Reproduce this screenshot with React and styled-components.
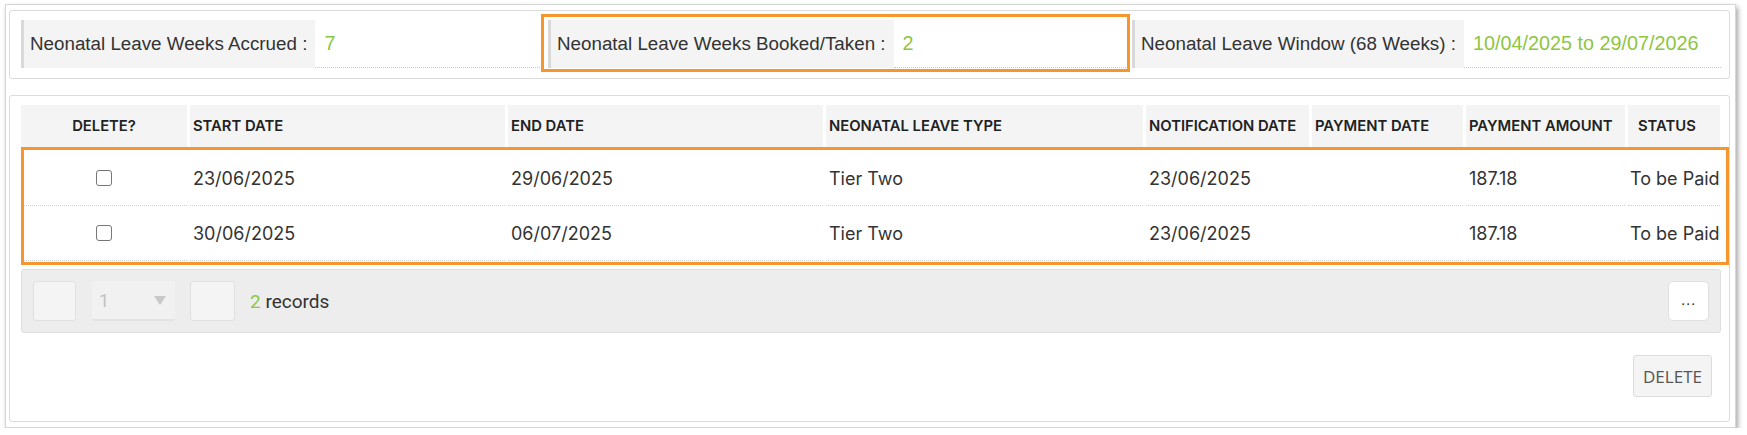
import React from "react";
import styled, { createGlobalStyle } from "styled-components";

const GlobalStyle = createGlobalStyle`
  html, body {
    margin: 0;
    padding: 0;
    background: #fff;
  }
  body {
    font-family: "Liberation Sans", Arial, sans-serif;
    color: #333;
  }
  * {
    box-sizing: border-box;
  }
`;

const ORANGE = "#f7962f";
const GREEN = "#8dc63f";
const COLS = "166px 315px 315px 317px 163px 151px 159px 92px";

const Window = styled.div`
  margin: 4px 0 0 5px;
  width: 1731px;
  border: 1px solid #d6d6d6;
  box-shadow: 2px 3px 5px rgba(0, 0, 0, 0.35);
  padding: 5px 5px 5px 3px;
  display: flex;
  flex-direction: column;
  gap: 16px;
`;

const Panel = styled.div`
  border: 1px solid #dcdcdc;
  border-radius: 3px;
  padding: ${(p) => p.$pad || "9px 8px 10px 11px"};
`;

const SummaryRow = styled.div`
  display: flex;
  gap: 6px;
`;

const Field = styled.div`
  position: relative;
  width: ${(p) => (p.$width ? `${p.$width}px` : "auto")};
  flex: ${(p) => (p.$width ? "none" : 1)};
  height: 48px;
  display: flex;

  ${(p) =>
    p.$highlight &&
    `
    &::after {
      content: "";
      position: absolute;
      top: -6px;
      bottom: -4px;
      left: -7px;
      right: -4px;
      border: 3px solid ${ORANGE};
      pointer-events: none;
    }
  `}
`;

const Label = styled.div`
  height: 100%;
  display: flex;
  align-items: center;
  background: #f4f4f4;
  border-left: 3px solid #d9d9d9;
  padding: 0 8px 0 6px;
  font-size: 18.8px;
  color: #333;
  white-space: nowrap;
`;

const Value = styled.div`
  flex: 1;
  display: flex;
  align-items: center;
  padding-left: 9px;
  border-bottom: 1px dotted #c8c8c8;
  font-size: 19.8px;
  color: ${GREEN};
  white-space: nowrap;
`;

const GridRow = styled.div`
  display: grid;
  grid-template-columns: ${COLS};
  column-gap: 3px;
  height: ${(p) => p.$height}px;
`;

const HeadCell = styled.div`
  background: #f4f4f4;
  display: flex;
  align-items: center;
  justify-content: ${(p) => (p.$center ? "center" : "flex-start")};
  padding-left: ${(p) => (p.$center ? 0 : p.$pad || 3)}px;
  font-family: Inter, "Liberation Sans", sans-serif;
  font-size: 14.8px;
  font-weight: 600;
  color: #222;
  white-space: nowrap;
`;

const Cell = styled.div`
  display: flex;
  align-items: center;
  justify-content: ${(p) => (p.$center ? "center" : "flex-start")};
  padding-left: ${(p) => (p.$center ? 0 : p.$pad || 3)}px;
  border-bottom: 1px dotted #cfcfcf;
  font-family: Inter, "Liberation Sans", sans-serif;
  font-size: 18px;
  color: #333;
  white-space: nowrap;
`;

const Rows = styled.div`
  position: relative;
  padding-top: 4px;

  &::after {
    content: "";
    position: absolute;
    top: 0;
    left: 0;
    right: -8px;
    bottom: -4px;
    border: 3.5px solid ${ORANGE};
    pointer-events: none;
  }
`;

const Check = styled.input.attrs({ type: "checkbox" })`
  appearance: none;
  width: 16px;
  height: 16px;
  margin: 0;
  border: 1.5px solid #777;
  border-radius: 3px;
  background: #fff;
`;

const PagerBar = styled.div`
  margin-top: 8px;
  height: 64px;
  background: #ededed;
  border: 1px solid #dedede;
  border-radius: 3px;
  display: flex;
  align-items: center;
  padding: 0 11px 0 11px;
  font-family: Roboto, "Liberation Sans", sans-serif;
`;

const PageButton = styled.div`
  width: ${(p) => p.$width}px;
  height: 40px;
  background: #f4f4f4;
  border: 1px solid #e0e0e0;
  border-radius: 3px;
  margin-right: ${(p) => p.$gap}px;
`;

const PageSelect = styled.div`
  width: 83px;
  height: 40px;
  background: #f1f1f1;
  border-bottom: 2px solid #e3e3e3;
  border-radius: 3px;
  margin-right: 15px;
  display: flex;
  align-items: center;
  justify-content: space-between;
  padding: 0 9px 0 7px;
  font-size: 18px;
  color: #c2c2c2;
`;

const Caret = styled.span`
  width: 0;
  height: 0;
  border-left: 6px solid transparent;
  border-right: 6px solid transparent;
  border-top: 9px solid #c8c8c8;
`;

const Records = styled.div`
  font-size: 19px;
  color: #333;

  b {
    font-weight: 400;
    color: ${GREEN};
  }
`;

const MoreButton = styled.div`
  margin-left: auto;
  width: 41px;
  height: 40px;
  background: #fff;
  border: 1px solid #e0e0e0;
  border-radius: 5px;
  display: flex;
  align-items: center;
  justify-content: center;
  font-size: 17px;
  letter-spacing: 0.5px;
  color: #333;
  padding-bottom: 5px;
`;

const Actions = styled.div`
  display: flex;
  justify-content: flex-end;
  padding: 22px 9px 0 0;
`;

const DeleteButton = styled.button`
  width: 79px;
  height: 42px;
  background: #f4f4f4;
  border: 1px solid #dcdcdc;
  border-radius: 3px;
  font-family: "Open Sans", "Liberation Sans", sans-serif;
  font-size: 17px;
  color: #555;
  padding: 0;
`;

const headers = [
  { text: "DELETE?", center: true },
  { text: "START DATE" },
  { text: "END DATE" },
  { text: "NEONATAL LEAVE TYPE" },
  { text: "NOTIFICATION DATE" },
  { text: "PAYMENT DATE" },
  { text: "PAYMENT AMOUNT" },
  { text: "STATUS", pad: 10 },
];

const rows = [
  ["23/06/2025", "29/06/2025", "Tier Two", "23/06/2025", "", "187.18", "To be Paid"],
  ["30/06/2025", "06/07/2025", "Tier Two", "23/06/2025", "", "187.18", "To be Paid"],
];

const App = () => {
  return (
    <>
      <GlobalStyle />
      <Window>
        <Panel>
          <SummaryRow>
            <Field $width={521}>
              <Label>Neonatal Leave Weeks Accrued :</Label>
              <Value>7</Value>
            </Field>
            <Field $width={578} $highlight>
              <Label>Neonatal Leave Weeks Booked/Taken :</Label>
              <Value>2</Value>
            </Field>
            <Field>
              <Label>Neonatal Leave Window (68 Weeks) :</Label>
              <Value>10/04/2025 to 29/07/2026</Value>
            </Field>
          </SummaryRow>
        </Panel>

        <Panel $pad="9px 8px 24px 11px">
          <GridRow $height={42}>
            {headers.map((h) => (
              <HeadCell key={h.text} $center={h.center} $pad={h.pad}>
                {h.text}
              </HeadCell>
            ))}
          </GridRow>
          <Rows>
            {rows.map((r, i) => (
              <GridRow $height={55} key={i}>
                <Cell $center>
                  <Check />
                </Cell>
                {r.map((v, j) => (
                  <Cell key={j} $pad={j === 6 ? 2 : 3}>
                    {v}
                  </Cell>
                ))}
              </GridRow>
            ))}
          </Rows>
          <PagerBar>
            <PageButton $width={43} $gap={16} />
            <PageSelect>
              1
              <Caret />
            </PageSelect>
            <PageButton $width={45} $gap={15} />
            <Records>
              <b>2</b> records
            </Records>
            <MoreButton>...</MoreButton>
          </PagerBar>
          <Actions>
            <DeleteButton>DELETE</DeleteButton>
          </Actions>
        </Panel>
      </Window>
    </>
  );
};

export default App;
